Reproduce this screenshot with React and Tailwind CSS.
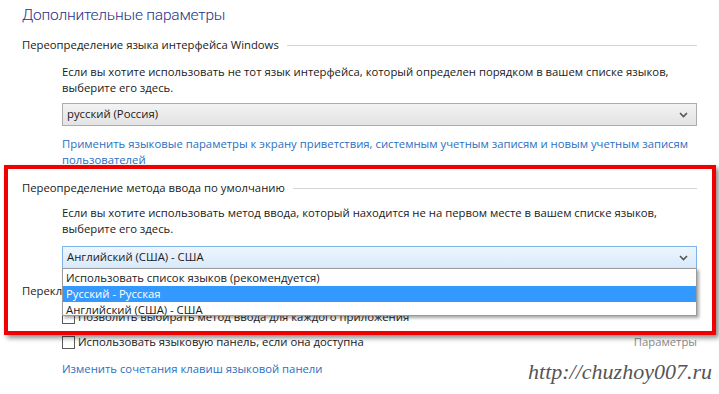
import React from 'react';

// Header with a thin rule running to the right edge
const SectionTitle = ({ children, className = '' }) => (
  <div className={`flex items-center h-[16px] leading-[16px] ${className}`}>
    <span className="whitespace-nowrap text-[#1a1a1a]">{children}</span>
    <div className="flex-1 ml-[8px] h-px bg-[#d5d5d5]" />
  </div>
);

const Chevron = () => (
  <svg width="9" height="6" viewBox="0 0 9 6" className="shrink-0">
    <path d="M1 1 L4.5 4.5 L8 1" fill="none" stroke="#555" strokeWidth="1.6" />
  </svg>
);

const Checkbox = () => (
  <span className="inline-block w-[13px] h-[13px] border border-[#5a5a5a] bg-white shrink-0" />
);

const App = () => {
  return (
    <div className="relative w-[719px] h-[394px] bg-white overflow-hidden whitespace-nowrap font-['Open_Sans',sans-serif] text-[11.3px] text-[#1a1a1a]">
      <div className="px-[22px]">
        <h1 className="h-[30px] leading-[30px] text-[15.5px] font-light tracking-[-0.2px] font-['Roboto',sans-serif] text-[#1e3287]">Дополнительные параметры</h1>

        {/* Interface language */}
        <SectionTitle className="mt-[7px]">Переопределение языка интерфейса Windows</SectionTitle>
        <div className="pl-[40px]">
          <p className="mt-[11px] leading-[16px]">
            Если вы хотите использовать не тот язык интерфейса, который определен порядком в вашем списке языков,<br />
            выберите его здесь.
          </p>
          <div className="mt-[7px] h-[23px] flex items-center justify-between px-[4px] pr-[8px] border border-[#acacac] bg-gradient-to-b from-[#f3f3f3] to-[#e3e3e3]">
            <span>русский (Россия)</span>
            <Chevron />
          </div>
          <p className="mt-[10px] leading-[16px] text-[#2b6fbf]">
            Применить языковые параметры к экрану приветствия, системным учетным записям и новым учетным записям<br />
            пользователей
          </p>
        </div>

        {/* Default input method */}
        <SectionTitle className="mt-[12px]">Переопределение метода ввода по умолчанию</SectionTitle>
        <div className="pl-[40px]">
          <p className="mt-[9px] leading-[16px]">
            Если вы хотите использовать метод ввода, который находится не на первом месте в вашем списке языков,<br />
            выберите его здесь.
          </p>
          <div className="mt-[9px] h-[23px] flex items-center justify-between px-[4px] pr-[8px] border border-[#7eb4ea] bg-gradient-to-b from-[#eef5fd] to-[#d8eafb]">
            <span>Английский (США) - США</span>
            <Chevron />
          </div>
        </div>

        {/* Switching input methods */}
        <SectionTitle className="mt-[14px]">Переключение методов ввода</SectionTitle>
        <div className="pl-[40px]">
          <div className="mt-[10px] h-[16px] flex items-center gap-[3px]">
            <Checkbox />
            <span>Позволить выбирать метод ввода для каждого приложения</span>
          </div>
          <div className="mt-[9px] h-[16px] flex items-center">
            <Checkbox />
            <span className="ml-[3px]">Использовать языковую панель, если она доступна</span>
            <span className="ml-auto text-[#8a8a8a]">Параметры</span>
          </div>
          <p className="mt-[11px] leading-[16px] text-[#2b6fbf]">Изменить сочетания клавиш языковой панели</p>
        </div>
      </div>

      {/* Open dropdown list */}
      <div className="absolute left-[62px] top-[268px] w-[635px] h-[48px] bg-white border border-[#9a9a9a] shadow-[2px_2px_3px_rgba(0,0,0,0.35)] py-px">
        <div className="h-[16px] leading-[16px] pl-[3px]">Использовать список языков (рекомендуется)</div>
        <div className="h-[16px] leading-[16px] pl-[3px] bg-[#3399ff] text-white">Русский - Русская</div>
        <div className="h-[15px] leading-[15px] pl-[3px]">Английский (США) - США</div>
      </div>

      {/* Red annotation frame */}
      <div className="absolute left-[4px] top-[165px] w-[712px] h-[170px] border-[4px] border-[#f00000] shadow-[3px_3px_5px_rgba(0,0,0,0.45)]" />

      {/* Watermark */}
      <div className="absolute right-[7px] top-[358px] leading-[28px] text-[22px] italic font-['Liberation_Serif',serif] text-[#555] [text-shadow:0_0_2px_#fff]">
        http://chuzhoy007.ru
      </div>
    </div>
  );
};

export default App;
